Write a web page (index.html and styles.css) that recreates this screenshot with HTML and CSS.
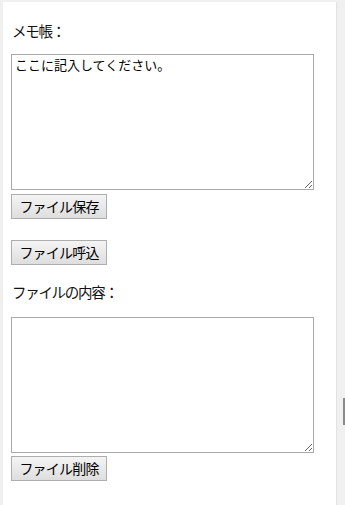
FILE: index.html
```html
<!DOCTYPE html>
<html lang="ja">
<head>
    <meta charset="UTF-8">
    <meta name="viewport" content="width=device-width, initial-scale=1.0">
    <title>メモ帳</title>
    <link rel="stylesheet" href="styles.css">
</head>
<body>
    <div class="panel">
        <p class="label">メモ帳：</p>
        <textarea class="memo" id="memo">ここに記入してください。</textarea>
        <button class="btn btn-save" type="button">ファイル保存</button>
        <button class="btn btn-load" type="button">ファイル呼込</button>

        <p class="label label-content">ファイルの内容：</p>
        <textarea class="memo memo-content" id="content"></textarea>
        <button class="btn btn-delete" type="button">ファイル削除</button>
    </div>
    <div class="scroll-mark"></div>
</body>
</html>
```

FILE: styles.css
```css
* {
    box-sizing: border-box;
}

html, body {
    height: 100%;
}

body {
    margin: 0;
    background: #f0f0f0;
    font-family: "Noto Sans CJK JP", "Noto Sans", sans-serif;
    color: #111;
    overflow: hidden;
}

.panel {
    width: 334px;
    min-height: 503px;
    margin: 2px 0 0 3px;
    padding: 18px 8px 0;
    background: #fff;
    border-right: 1px solid #e2e2e2;
    display: flex;
    flex-direction: column;
    align-items: flex-start;
}

.label {
    margin: 0;
    font-size: 14.5px;
    letter-spacing: -1.3px;
    line-height: 22px;
    padding-left: 1px;
}

.label-content {
    margin-top: 16px;
}

.memo {
    display: block;
    width: 303px;
    height: 136px;
    margin-top: 12px;
    padding: 2px 3px;
    border: 1px solid #a9a9a9;
    font-family: "Noto Sans CJK JP", monospace;
    font-size: 13px;
    line-height: 16px;
    color: #000;
    resize: both;
}

.memo-content {
    margin-top: 14px;
}

.btn {
    width: 96px;
    height: 25px;
    margin-top: 4px;
    padding: 0 4px;
    border: 1px solid #adadad;
    border-radius: 0;
    background: linear-gradient(#f4f4f4, #dedede);
    font-family: "Noto Sans CJK JP", sans-serif;
    font-size: 14px;
    letter-spacing: -0.8px;
    line-height: 21px;
    color: #000;
}

.btn-load {
    margin-top: 21px;
}

.btn-delete {
    margin-top: 3px;
}

.scroll-mark {
    position: absolute;
    left: 343px;
    top: 398px;
    width: 2px;
    height: 27px;
    background: #8a8a8a;
}
```
